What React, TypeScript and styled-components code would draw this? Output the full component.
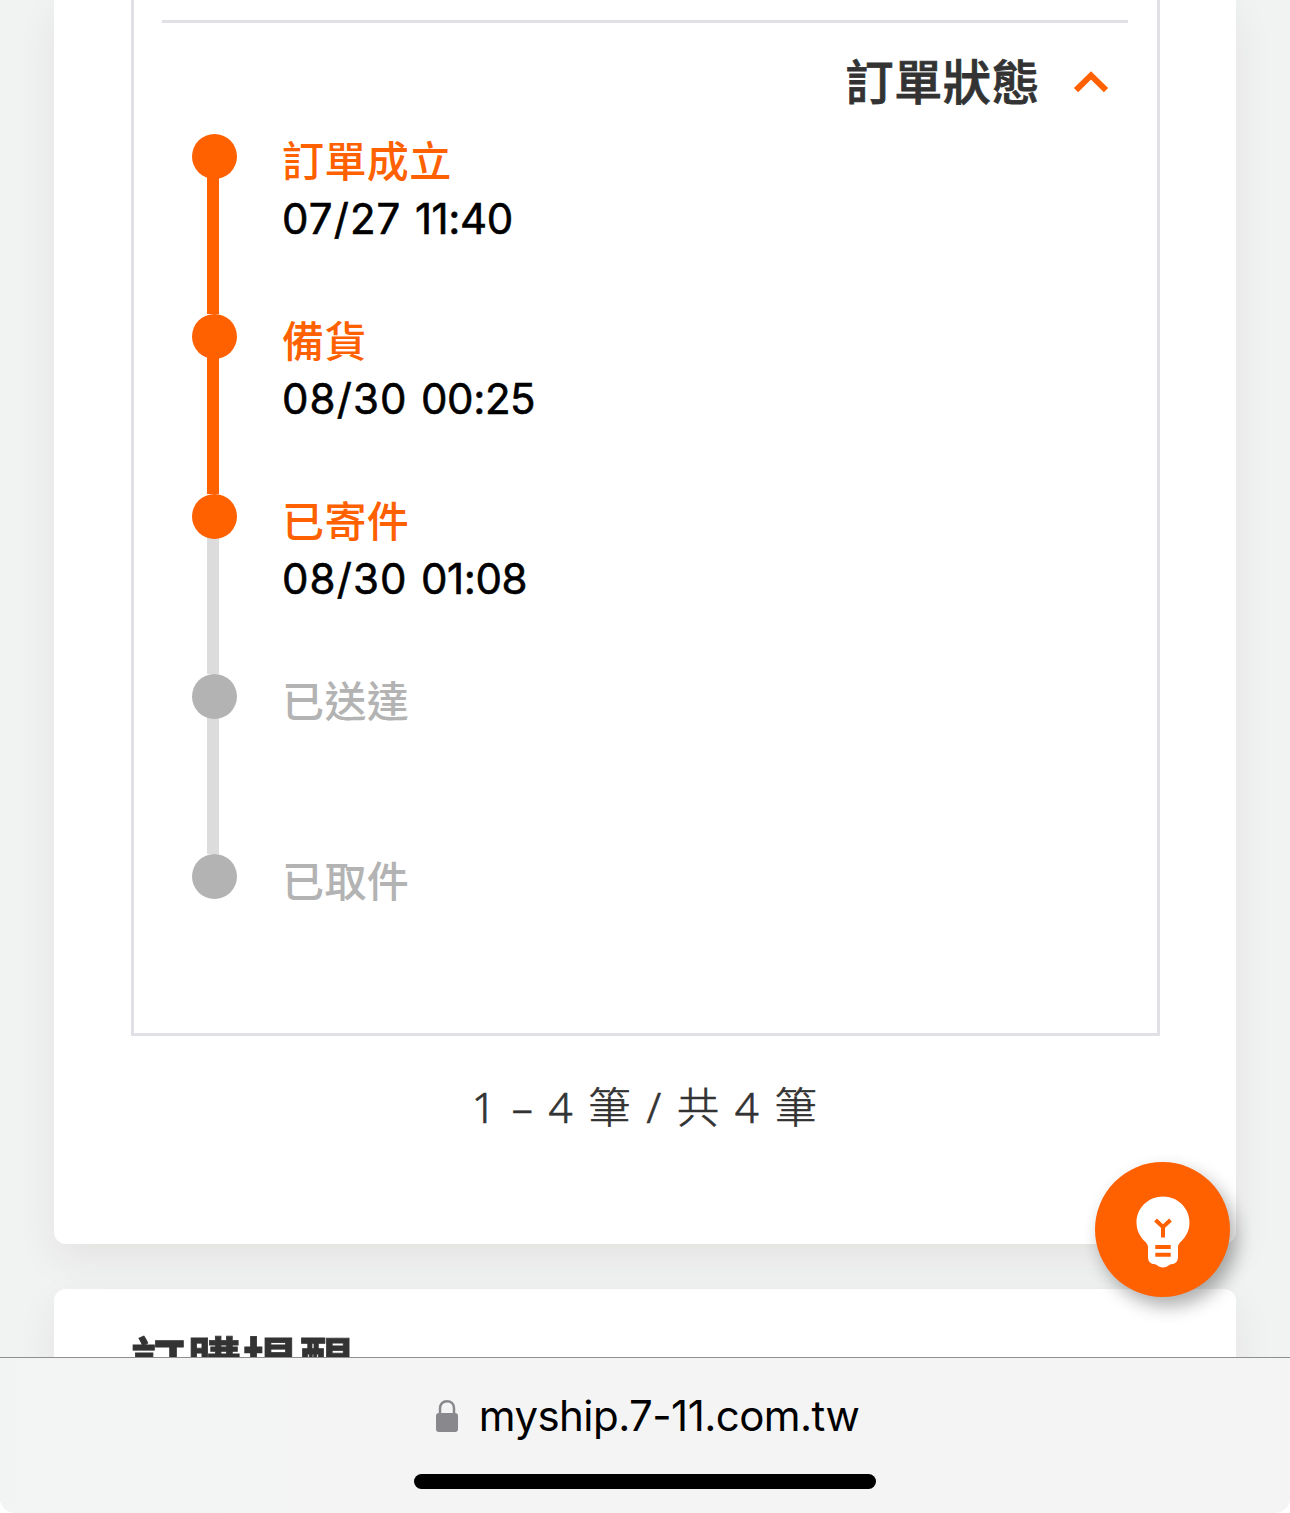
import styled, { createGlobalStyle } from "styled-components";

type TStep = {
  title: string;
  date?: string;
  time?: string;
  done: boolean;
  lineDone?: boolean;
};

const STEPS: TStep[] = [
  { title: "訂單成立", date: "07/27", time: "11:40", done: true, lineDone: true },
  { title: "備貨", date: "08/30", time: "00:25", done: true, lineDone: true },
  { title: "已寄件", date: "08/30", time: "01:08", done: true },
  { title: "已送達", done: false },
  { title: "已取件", done: false },
];

export default function App() {
  return (
    <>
      <GlobalStyle />
      <Screen>
        <OrderCard>
          <OrderBox>
            <Divider />
            <StatusHeader type="button">
              <StatusTitle>訂單狀態</StatusTitle>
              <ArrowIcon />
            </StatusHeader>

            <StepList>
              {STEPS.map(({ title, date, time, done, lineDone }, index) => (
                <Step key={title}>
                  <Track>
                    <Dot $done={done} />
                    {index < STEPS.length - 1 && <Line $done={lineDone} />}
                  </Track>
                  <StepText>
                    <StepTitle $done={done}>{title}</StepTitle>
                    {date && (
                      <StepTime>
                        <DateText>{date}</DateText> {time}
                      </StepTime>
                    )}
                  </StepText>
                </Step>
              ))}
            </StepList>
          </OrderBox>

          <PageCount>1 – 4 筆 / 共 4 筆</PageCount>
        </OrderCard>

        <NoticeCard>
          <NoticeTitle>訂購提醒</NoticeTitle>
        </NoticeCard>

        <HintBtn type="button" aria-label="hint">
          <BulbIcon />
        </HintBtn>

        <BrowserBar>
          <Address>
            <LockIcon />
            <Url>myship.7-11.com.tw</Url>
          </Address>
          <HomeIndicator />
        </BrowserBar>
      </Screen>
    </>
  );
}

function ArrowIcon() {
  return (
    <svg width="36" height="24" viewBox="0 0 36 24" fill="none">
      <path d="M3 20.2 18 5.4l15 14.800" stroke="#ff6000" strokeWidth="6" />
    </svg>
  );
}

function BulbIcon() {
  return (
    <svg width="54" height="72" viewBox="0 0 54 72" fill="none">
      <path
        d="M27 0.5C12.300 0.500 0.500 12 0.500 26.500C0.500 35 4.500 41.500 9.500 46C11 47.500 12 49 12 51.500V61C12 65.500 14.500 68 19 68.300C21 68.500 22.500 71.500 27 71.500C31.500 71.500 33 68.500 35 68.300C39.500 68 42 65.500 42 61V51.500C42 49 43 47.500 44.500 46C49.500 41.500 53.500 35 53.500 26.500C53.500 12 41.700 0.500 27 0.500Z"
        fill="#fff"
      />
      <path d="M19.500 24 27 31 34.500 24M27 30.500V41.500" stroke="#ff6000" strokeWidth="4" />
      <path d="M19.300 51H34.700M19.300 58.700H34.700" stroke="#ff6000" strokeWidth="4" />
    </svg>
  );
}

function LockIcon() {
  return (
    <svg width="22" height="32" viewBox="0 0 22 32" fill="none">
      <path d="M4 15V8.500C4 4 6.800 1.300 11 1.300C15.200 1.300 18 4 18 8.500V15" stroke="#88888d" strokeWidth="2.500" />
      <rect y="13" width="22" height="19" rx="3" fill="#88888d" />
    </svg>
  );
}

const GlobalStyle = createGlobalStyle`
  * {
    box-sizing: border-box;
  }

  body {
    margin: 0;
    background-color: #fff;
    font-family: "Noto Sans CJK TC", sans-serif;
  }

  button {
    padding: 0;
    border: none;
    background: none;
    font-family: inherit;
    cursor: pointer;
  }

  p, h2, ul {
    margin: 0;
    padding: 0;
  }

  svg {
    display: block;
    flex-shrink: 0;
  }
`;

const Screen = styled.div`
  position: relative;
  display: flex;
  flex-direction: column;
  gap: 45px;
  width: 1290px;
  height: 1513px;
  padding: 0 54px;
  overflow: hidden;
  background-color: #f1f3f2;
  border-radius: 0 0 15px 15px;
`;

const Card = styled.section`
  flex-shrink: 0;
  padding: 0 76px 0 77px;
  background-color: #fff;
  box-shadow: 0 15px 40px rgba(40, 0, 20, 0.07);
`;

const OrderCard = styled(Card)`
  height: 1244px;
  border-radius: 0 0 12px 12px;
`;

const NoticeCard = styled(Card)`
  height: 300px;
  padding-top: 31px;
  border-radius: 12px;
`;

const OrderBox = styled.div`
  height: 1036px;
  padding: 20px 29px 0 28px;
  border: 3px solid #dfe1e6;
  border-top: none;
`;

const Divider = styled.div`
  height: 3px;
  background-color: #dfe1e6;
`;

const StatusHeader = styled.button`
  display: flex;
  align-items: flex-start;
  justify-content: flex-end;
  gap: 33px;
  width: 100%;
  height: 111px;
  padding: 20px 19px 0 0;

  svg {
    margin-top: 27px;
  }
`;

const StatusTitle = styled.span`
  color: #333;
  font-size: 48px;
  font-weight: 500;
  letter-spacing: 0.6px;
  line-height: 72px;
  -webkit-text-stroke: 0.8px #333;
`;

const StepList = styled.ul`
  padding-left: 30px;
  list-style: none;
`;

const Step = styled.li`
  display: flex;
  gap: 45px;
  height: 180px;
`;

const Track = styled.div`
  display: flex;
  flex-direction: column;
  width: 45px;
`;

const Dot = styled.span<{ $done: boolean }>`
  flex-shrink: 0;
  z-index: 1;
  width: 45px;
  height: 45px;
  border-radius: 50%;
  background-color: ${({ $done }) => ($done ? "#ff6000" : "#b3b3b3")};
`;

const Line = styled.span<{ $done?: boolean }>`
  flex: 1;
  width: 12px;
  margin: -2px 0 0 15px;
  background-color: ${({ $done }) => ($done ? "#ff6000" : "#dcdcdc")};
`;

const StepText = styled.div`
  white-space: nowrap;
`;

const StepTitle = styled.p<{ $done: boolean }>`
  color: ${({ $done }) => ($done ? "#ff6000" : "#b3b3b3")};
  font-size: 42px;
  font-weight: 500;
  letter-spacing: 0.4px;
  line-height: 50px;
`;

const StepTime = styled.p`
  margin-top: 6px;
  color: #000;
  font-family: Inter, sans-serif;
  font-size: 42px;
  font-weight: 400;
  line-height: 58px;
  letter-spacing: -0.4px;
  word-spacing: 2px;
  -webkit-text-stroke: 0.6px #000;
`;

const DateText = styled.span`
  letter-spacing: 1.1px;
`;

const PageCount = styled.p`
  margin-top: 41px;
  color: #333;
  font-family: "Noto Sans", "Noto Sans CJK TC", sans-serif;
  font-size: 42px;
  font-weight: 300;
  line-height: 60px;
  letter-spacing: 2.5px;
  text-align: center;
  -webkit-text-stroke: 0.7px #333;
`;

const NoticeTitle = styled.h2`
  color: #333;
  font-size: 54px;
  font-weight: 700;
  line-height: 80px;
  letter-spacing: 2px;
  -webkit-text-stroke: 0.8px #333;
`;

const HintBtn = styled.button`
  position: absolute;
  top: 1162px;
  right: 60px;
  display: flex;
  align-items: center;
  justify-content: center;
  width: 135px;
  height: 135px;
  padding-top: 4px;
  background-color: #ff6000;
  border-radius: 50%;
  box-shadow: 6px 9px 18px rgba(0, 0, 0, 0.32);
`;

const BrowserBar = styled.footer`
  position: absolute;
  bottom: 0;
  left: 0;
  display: flex;
  flex-direction: column;
  align-items: center;
  width: 100%;
  height: 156px;
  background: linear-gradient(90deg, #f2f4f3 0%, #f4f4f4 40%);
  border-top: 1px solid #8e8e93;
`;

const Address = styled.div`
  display: flex;
  align-items: center;
  gap: 21px;
  height: 116px;
  padding-left: 5px;
`;

const Url = styled.span`
  color: #000;
  font-family: Inter, sans-serif;
  font-size: 42px;
  line-height: 56px;
  letter-spacing: -0.55px;
`;

const HomeIndicator = styled.div`
  width: 462px;
  height: 15px;
  background-color: #000;
  border-radius: 8px;
`;
